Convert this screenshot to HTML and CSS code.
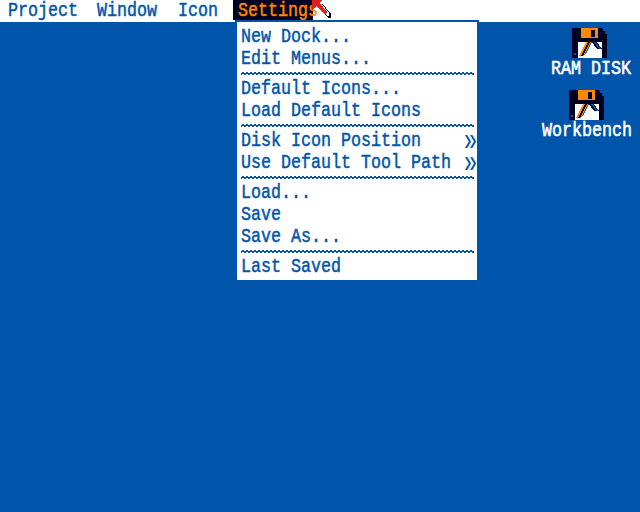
FILE: index.html
```html
<!doctype html>
<html lang="en">
<head>
	<meta charset="UTF-8">
	<title>Workbench</title>
	<link rel="stylesheet" href="styles.css">
</head>
<body>
	<div class="menubar">
		<span class="title t-project"><b>Project</b></span>
		<span class="title t-window"><b>Window</b></span>
		<span class="title t-icon"><b>Icon</b></span>
		<span class="title t-settings"><b>Settings</b></span>
	</div>

	<div class="menu">
		<div class="item"><b>New Dock...</b></div>
		<div class="item"><b>Edit Menus...</b></div>
		<div class="sep"></div>
		<div class="item"><b>Default Icons...</b></div>
		<div class="item"><b>Load Default Icons</b></div>
		<div class="sep"></div>
		<div class="item"><b>Disk Icon Position</b><i>»</i></div>
		<div class="item"><b>Use Default Tool Path</b><i>»</i></div>
		<div class="sep"></div>
		<div class="item"><b>Load...</b></div>
		<div class="item"><b>Save</b></div>
		<div class="item"><b>Save As...</b></div>
		<div class="sep"></div>
		<div class="item"><b>Last Saved</b></div>
	</div>

	<svg width="0" height="0" class="defs">
		<symbol id="disk" viewBox="0 0 36 30" shape-rendering="crispEdges">
			<path fill="#000022" d="M0 0h30v1h2v2h2v3h1v24H0z"/>
			<path fill="#0055aa" d="M31 1h1v2h-1zM33 3h1v3h-1z"/>
			<path fill="#ff8800" d="M9 0h17v10H9z"/>
			<path fill="#000022" d="M19 2h4v7h-4z"/>
			<path fill="#fff" d="M6 14h24v16H6z"/>
			<path fill="#0055aa" d="M2 25h2v2H2z"/>
			<polygon fill="#ff8800" points="14,14 16,14 9,28 7,28"/>
			<polygon fill="#000022" points="16,14 18,14 11,28 9,28"/>
			<polygon fill="#ff8800" points="18,14 19,14 13,26 11,28"/>
			<polygon fill="#0055aa" points="19,14 20,14 15,24 13,26"/>
			<polygon fill="#000022" points="20,14 22,14 27,21 25,21"/>
			<polygon fill="#0055aa" points="22,14 24,14 29,21 27,21"/>
			<polygon fill="#000022" points="24,14 25,14 30,21 29,21"/>
		</symbol>
	</svg>

	<div class="icon icon-ram">
		<svg class="disk" width="36" height="30"><use href="#disk"/></svg>
		<span class="label">RAM DISK</span>
	</div>
	<div class="icon icon-wb">
		<svg class="disk" width="36" height="30"><use href="#disk"/></svg>
		<span class="label">Workbench</span>
	</div>

	<svg class="pointer" width="22" height="20" viewBox="0 0 22 20" shape-rendering="crispEdges">
		<path fill="#000" d="M12 3 21 14V18H18L8 8Z"/>
		<path fill="#fff" d="M11 3 19 13V16H17L8 7Z"/>
		<path fill="#e02020" d="M2 0H12L10 3 17 12 15 15 6 6 3 10H2Z"/>
	</svg>
</body>
</html>
```
FILE: styles.css
```css
* {
	margin: 0;
	padding: 0;
	box-sizing: border-box;
}
html, body {
	width: 640px;
	height: 512px;
	overflow: hidden;
}
body {
	background: #0055aa;
	position: relative;
	font-family: "Liberation Mono", "DejaVu Sans Mono", monospace;
	font-size: 16.67px;
	line-height: 22px;
	color: #0055aa;
}
b {
	display: inline-block;
	font-weight: normal;
	-webkit-text-stroke: 0.4px currentColor;
	transform: scaleY(1.2);
	transform-origin: 0 55%;
	white-space: pre;
}
.menubar {
	display: flex;
	height: 22px;
	background: #fff;
	padding-left: 3px;
}
.title {
	padding: 0 5px;
}
.t-project { width: 89px; }
.t-window { width: 81px; }
.t-icon { width: 60px; }
.t-settings {
	width: 80px;
	height: 20px;
	background: #000022;
	color: #ff8800;
}
.menu {
	position: absolute;
	left: 235px;
	top: 20px;
	width: 244px;
	height: 262px;
	background: #fff;
	border: 2px solid #0055aa;
	padding: 2px 3px 4px 4px;
}
.item {
	display: flex;
	justify-content: space-between;
	height: 22px;
	line-height: 26px;
}
.item i {
	display: block;
	font-style: normal;
	width: 10px;
	font-size: 22px;
	transform: scaleY(1.5);
	transform-origin: 50% 48%;
}
.sep {
	height: 4px;
	margin-top: 4px;
	background:
		repeating-linear-gradient(90deg, #fff 0 1px, #0055aa 1px 3px, #fff 3px 4px) 0 0 / 100% 1px no-repeat,
		linear-gradient(#0055aa, #0055aa) 0 1px / 100% 1px no-repeat,
		repeating-linear-gradient(90deg, #0055aa 0 1px, #fff 1px 3px, #0055aa 3px 4px) 0 2px / 100% 1px no-repeat;
}
.defs {
	position: absolute;
}
.icon {
	position: absolute;
	display: flex;
	flex-direction: column;
	align-items: center;
	color: #fff;
}
.icon-ram { left: 551px; top: 28px; width: 80px; }
.icon-wb { left: 542px; top: 90px; width: 90px; }
.disk {
	display: block;
}
.icon-ram .disk { margin-left: -2px; }
.label {
	display: block;
	white-space: pre;
	-webkit-text-stroke: 0.5px #fff;
	transform: scaleY(1.2);
}
.pointer {
	position: absolute;
	left: 310px;
	top: 0;
}
```
